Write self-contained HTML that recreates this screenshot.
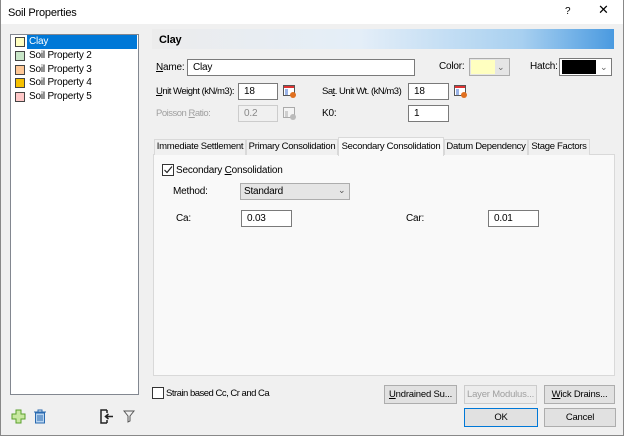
<!DOCTYPE html>
<html><head><meta charset="utf-8"><style>
*{box-sizing:border-box;margin:0;padding:0}
body{width:624px;height:436px;background:#f0f0f0;font-family:"Liberation Sans",sans-serif;font-size:10px;letter-spacing:-0.2px;color:#000;position:relative;overflow:hidden}
.a{position:absolute}
.t{position:absolute;white-space:nowrap;line-height:12px}
.inp{position:absolute;background:#fff;border:1px solid #7a7a7a;height:17px;padding:2px 5px;line-height:12px;white-space:nowrap}
.btn{position:absolute;background:#e1e1e1;border:1px solid #adadad;height:19px;text-align:center;line-height:17px;white-space:nowrap;overflow:hidden;font-size:9.5px}
.sw{position:absolute;width:10px;height:10px;border:1px solid #444}
u{text-decoration:underline}
.tab{position:absolute;top:139px;height:16px;border:1px solid #d9d9d9;border-bottom:none;background:#f0f0f0;text-align:center;line-height:14px;font-size:9.5px;white-space:nowrap;overflow:hidden;letter-spacing:-0.3px}
.n{letter-spacing:-0.5px;font-size:9.5px}
</style></head><body>
<div class="a" style="left:0;top:0;width:624px;height:25px;background:#fff;border-bottom:1px solid #f0f0f0"></div>
<div class="a" style="left:0;top:0;width:1px;height:436px;background:#888"></div>
<div class="a" style="left:623px;top:0;width:1px;height:436px;background:#888"></div>
<div class="a" style="left:0;top:435px;width:624px;height:1px;background:#888"></div>
<div class="t" style="left:8px;top:7px;font-size:11px">Soil Properties</div>
<div class="t" style="left:565px;top:6px">?</div>
<div class="t" style="left:598px;top:4px;font-size:13px">✕</div>

<div class="a" style="left:10px;top:34px;width:129px;height:361px;background:#fff;border:1px solid #828790"></div>
<div class="a" style="left:27px;top:35px;width:110px;height:14px;background:#0078d7"></div>
<div class="sw" style="left:15px;top:37px;background:#ffffc0"></div><div class="t" style="left:29px;top:36px;color:#fff">Clay</div>
<div class="sw" style="left:15px;top:51px;background:#c8e6c8"></div><div class="t" style="left:29px;top:50px">Soil Property 2</div>
<div class="sw" style="left:15px;top:65px;background:#ffc896"></div><div class="t" style="left:29px;top:64px">Soil Property 3</div>
<div class="sw" style="left:15px;top:78px;background:#f5c000"></div><div class="t" style="left:29px;top:77px">Soil Property 4</div>
<div class="sw" style="left:15px;top:92px;background:#ffc8c8"></div><div class="t" style="left:29px;top:91px">Soil Property 5</div>

<div class="a" style="left:152px;top:29px;width:462px;height:20px;background:linear-gradient(90deg,#ececec 0%,#e4eef8 45%,#a8d0f0 80%,#4a9ae0 100%)"></div>
<div class="t" style="left:159px;top:34px;font-weight:bold;font-size:11px">Clay</div>

<div class="t" style="left:156px;top:62px"><u>N</u>ame:</div>
<div class="inp" style="left:187px;top:59px;width:228px">Clay</div>
<div class="t" style="left:439px;top:61px">Color:</div>
<div class="a" style="left:469px;top:58px;width:41px;height:18px;border:1px solid #adadad;background:#e5e5e5"></div>
<div class="a" style="left:471px;top:60px;width:24px;height:14px;background:#ffffc0"></div>
<div class="t" style="left:497px;top:61px;color:#666;font-size:9px">⌄</div>
<div class="t" style="left:530px;top:61px">Hatch:</div>
<div class="a" style="left:559px;top:58px;width:53px;height:18px;border:1px solid #7a7a7a;background:#fff"></div>
<div class="a" style="left:562px;top:60px;width:34px;height:14px;background:#000"></div>
<div class="t" style="left:600px;top:61px;color:#666;font-size:9px">⌄</div>

<div class="t n" style="left:156px;top:86px"><u>U</u>nit Weight (kN/m3):</div>
<div class="inp" style="left:238px;top:83px;width:40px">18</div>
<svg class="a" style="left:283px;top:85px" width="14" height="14"><rect x="0.5" y="0.5" width="11" height="10" fill="#fff" stroke="#555"/><rect x="1" y="1" width="10" height="2" fill="#d33"/><path d="M2 5h3M2 7h3M2 9h3" stroke="#36c"/><circle cx="10" cy="10" r="3" fill="#e07020"/></svg>
<div class="t n" style="left:322px;top:86px">Sa<u>t</u>. Unit Wt. (kN/m3)</div>
<div class="inp" style="left:408px;top:83px;width:41px">18</div>
<svg class="a" style="left:454px;top:85px" width="14" height="14"><rect x="0.5" y="0.5" width="11" height="10" fill="#fff" stroke="#555"/><rect x="1" y="1" width="10" height="2" fill="#d33"/><path d="M2 5h3M2 7h3M2 9h3" stroke="#36c"/><circle cx="10" cy="10" r="3" fill="#e07020"/></svg>

<div class="t n" style="left:156px;top:108px;color:#a0a0a0">Poisson <u>R</u>atio:</div>
<div class="inp" style="left:238px;top:105px;width:40px;background:#f0f0f0;border-color:#ccc;color:#888">0.2</div>
<svg class="a" style="left:283px;top:107px" width="14" height="14"><rect x="0.5" y="0.5" width="11" height="10" fill="#f4f4f4" stroke="#aaa"/><path d="M2 5h3M2 7h3M2 9h3" stroke="#aaa"/><circle cx="10" cy="10" r="3" fill="#bbb"/></svg>
<div class="t" style="left:322px;top:108px">K0:</div>
<div class="inp" style="left:408px;top:105px;width:41px">1</div>

<div class="a" style="left:153px;top:154px;width:462px;height:222px;background:#f9f9f9;border:1px solid #d9d9d9"></div>
<div class="tab" style="left:154px;width:92px">Immediate Settlement</div>
<div class="tab" style="left:246px;width:92px">Primary Consolidation</div>
<div class="tab" style="left:338px;top:137px;height:19px;width:106px;background:#f9f9f9;line-height:17px">Secondary Consolidation</div>
<div class="tab" style="left:444px;width:84px">Datum Dependency</div>
<div class="tab" style="left:528px;width:62px">Stage Factors</div>

<div class="a" style="left:162px;top:164px;width:12px;height:12px;border:1px solid #333;background:#fff"></div>
<svg class="a" style="left:163px;top:165px" width="10" height="10"><path d="M1.5 5l2.5 2.5 5-6" fill="none" stroke="#222" stroke-width="1.2"/></svg>
<div class="t" style="left:176px;top:165px">Secondary <u>C</u>onsolidation</div>
<div class="t" style="left:173px;top:186px">Method:</div>
<div class="a" style="left:240px;top:183px;width:110px;height:17px;background:#e5e5e5;border:1px solid #adadad"></div>
<div class="t" style="left:244px;top:186px">Standard</div>
<div class="t" style="left:338px;top:184px;color:#555;font-size:9px">⌄</div>
<div class="t" style="left:176px;top:213px">Ca:</div>
<div class="inp" style="left:241px;top:210px;width:51px">0.03</div>
<div class="t" style="left:406px;top:213px">Car:</div>
<div class="inp" style="left:488px;top:210px;width:51px">0.01</div>

<div class="a" style="left:152px;top:387px;width:12px;height:12px;border:1px solid #333;background:#fff"></div>
<div class="t n" style="left:166px;top:388px">Strain based Cc, Cr and Ca</div>
<div class="btn" style="left:384px;top:385px;width:73px"><u>U</u>ndrained Su...</div>
<div class="btn" style="left:464px;top:385px;width:73px;color:#a0a0a0;background:#ececec;border-color:#ccc">Layer Modulus...</div>
<div class="btn" style="left:544px;top:385px;width:71px"><u>W</u>ick Drains...</div>
<div class="btn" style="left:464px;top:408px;width:74px;border:1px solid #0078d7">OK</div>
<div class="btn" style="left:544px;top:408px;width:72px">Cancel</div>

<svg class="a" style="left:11px;top:409px" width="15" height="15"><path d="M5 1h5v4h4v5h-4v4h-5v-4h-4v-5h4z" fill="#c8e8a0" stroke="#5aa02c"/></svg>
<svg class="a" style="left:33px;top:409px" width="14" height="15"><path d="M1 3h12M5 3V1h4v2" fill="none" stroke="#2a6ab0"/><rect x="2.5" y="4" width="9" height="10" fill="#b8d4f0" stroke="#2a6ab0"/><path d="M5 6v6M7 6v6M9 6v6" stroke="#2a6ab0"/></svg>
<svg class="a" style="left:100px;top:409px" width="14" height="15"><path d="M7 1H1v13h6M7 1v3M7 14v-3" fill="none" stroke="#222" stroke-width="1.5"/><path d="M13 7.5H6M8.5 5l-3 2.5 3 2.5" fill="none" stroke="#222" stroke-width="1.5"/></svg>
<svg class="a" style="left:123px;top:410px" width="12" height="13"><path d="M1 1h10L7 6v5l-2 1V6z" fill="none" stroke="#555"/></svg>
</body></html>
